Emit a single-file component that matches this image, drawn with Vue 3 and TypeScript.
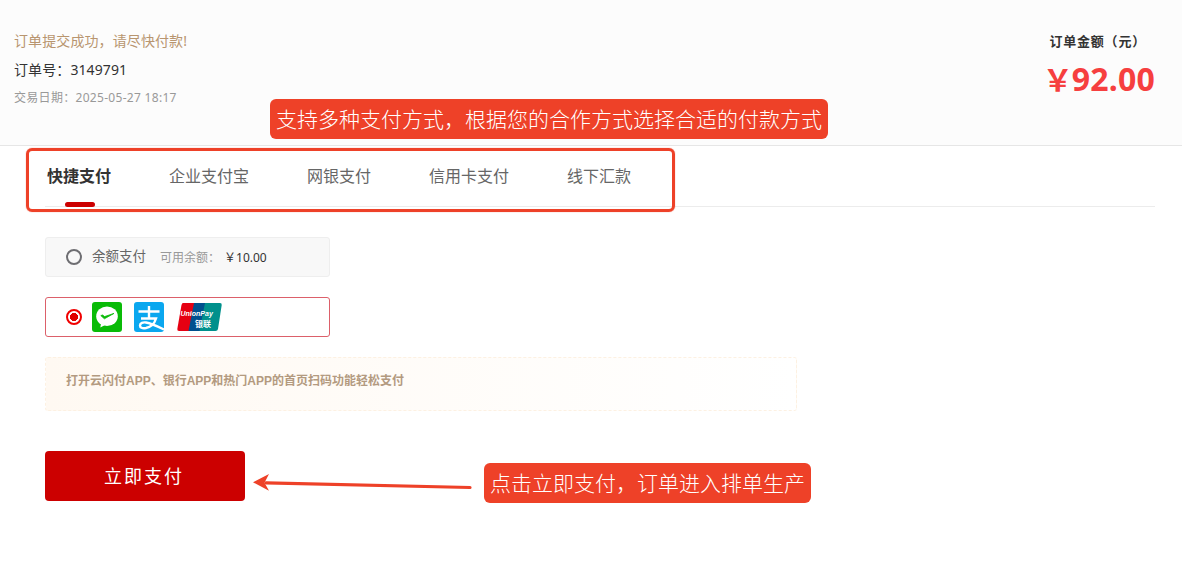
<script setup lang="ts">
const tabs: string[] = ['快捷支付', '企业支付宝', '网银支付', '信用卡支付', '线下汇款']
</script>

<template>
  <div class="page">
    <header class="head">
      <div class="info">
        <p class="tip">订单提交成功，请尽快付款!</p>
        <p class="no">订单号：3149791</p>
        <p class="date">交易日期：2025-05-27 18:17</p>
      </div>
      <div class="sum">
        <p class="sum-label">订单金额（元）</p>
        <p class="sum-value"><span class="yen">￥</span>92.00</p>
      </div>
    </header>

    <main class="body">
      <nav class="tabs">
        <span v-for="(t, i) in tabs" :key="t" class="tab" :class="{ on: i === 0 }">{{ t }}</span>
      </nav>

      <div class="opt balance">
        <i class="radio"></i>
        <span class="b-name">余额支付</span>
        <span class="b-avail">可用余额：</span>
        <span class="b-val">￥10.00</span>
      </div>

      <div class="opt chosen">
        <i class="radio red"></i>
        <svg class="ic" viewBox="0 0 30 30" width="30" height="30">
          <rect width="30" height="30" rx="3" fill="#09bb07" />
          <ellipse cx="15" cy="14.2" rx="10.8" ry="9.800" fill="#fff" />
          <path d="M9 21l-.6 4.500 4.600-2.600z" fill="#fff" />
          <path d="M8.800 13.600l3.600 3.200 9.600-5.400-9.400 3.200-2-1.600z" fill="#09bb07" stroke="#09bb07" stroke-width=".8" />
        </svg>
        <svg class="ic" viewBox="0 0 30 30" width="30" height="30">
          <rect width="30" height="30" rx="3" fill="#0aa7ef" />
          <g fill="none" stroke="#fff" stroke-width="2.400">
            <path d="M4.500 9.500h21M15 4v12.500M7 16.500h15c-1.500 5-5 8.500-10 9.500-4 .7-6-.5-6-2.500 0-2.500 3-3.500 6-3 3.800.6 10 3 18 7" />
          </g>
        </svg>
        <svg class="ic up" viewBox="0 0 45 28" width="45" height="28">
          <path d="M6 0h14l-5.500 28H2q-2 0-1.700-2L4.500 2Q5 0 6 0z" fill="#e60012" />
          <path d="M17 0h14l-5.500 28H11.500z" fill="#00508e" />
          <path d="M28 0h15q2 0 1.700 2L41 26q-.4 2-2.500 2H22.500z" fill="#00908c" />
          <text x="3.500" y="13" class="up-a">UnionPay</text>
          <text x="18" y="24" class="up-b">银联</text>
        </svg>
      </div>

      <div class="notice">打开云闪付APP、银行APP和热门APP的首页扫码功能轻松支付</div>

      <button class="pay" type="button">立即支付</button>
    </main>

    <!-- 标注层 -->
    <div class="mark-box"></div>
    <div class="callout c1">支持多种支付方式，根据您的合作方式选择合适的付款方式</div>
    <div class="callout c2">点击立即支付，订单进入排单生产</div>
    <svg class="arrow" viewBox="0 0 230 24" width="230" height="24">
      <path d="M217 15.500L13 10.800" stroke="#ee4128" stroke-width="3.200" stroke-linecap="round" fill="none" />
      <path d="M0 10.300L16 2L11.500 10.800L16 18.700z" fill="#ee4128" />
    </svg>
  </div>
</template>

<style>
html, body { margin: 0; background: #fff; }
</style>

<style scoped>
.page {
  position: relative;
  height: 573px;
  overflow: hidden;
  font-family: "Noto Sans", "Noto Sans CJK SC", sans-serif;
  color: #333;
}
p { margin: 0; }
.head {
  height: 145px;
  display: flex;
  justify-content: space-between;
  padding: 0 27px 0 14px;
  background: #fcfcfc;
  border-bottom: 1px solid #e6e6e6;
}
.info { padding-top: 31px; }
.tip { font-size: 14px; line-height: 20px; color: #b8956f; letter-spacing: .1px; }
.no { font-size: 14px; line-height: 20px; margin-top: 9px; color: #333; letter-spacing: .1px; }
.date { font-size: 12px; line-height: 16px; margin-top: 10px; color: #999; letter-spacing: .3px; }
.sum { padding-top: 32px; display: flex; flex-direction: column; align-items: flex-end; }
.sum-label { font-size: 13px; line-height: 18px; font-weight: 700; margin-right: 9px; letter-spacing: .8px; }
.sum-value { font-size: 32px; line-height: 44px; font-weight: 700; color: #f63f3f; margin-top: 7px; letter-spacing: .2px; }
.yen { font-size: 30px; letter-spacing: -1px; }
.body { padding: 0 27px 0 45px; }
.tabs {
  height: 60px;
  display: flex;
  gap: 58px;
  border-bottom: 1px solid #ececec;
  padding-left: 2px;
}
.tab {
  position: relative;
  font-size: 16px;
  line-height: 60px;
  color: #666;
}
.tab.on { font-weight: 700; color: #333; }
.tab.on::after {
  content: "";
  position: absolute;
  left: 18px;
  bottom: -1px;
  width: 30px;
  height: 5px;
  border-radius: 3px;
  background: #cc0000;
}
.opt {
  width: 285px;
  height: 40px;
  box-sizing: border-box;
  display: flex;
  align-items: center;
  padding-left: 20px;
  border-radius: 3px;
  border: 1px solid #eee;
}
.balance { margin-top: 30px; background: #f8f8f8; }
.chosen { margin-top: 20px; border-color: #dc606a; background: #fff; }
.radio {
  width: 16px;
  height: 16px;
  box-sizing: border-box;
  border-radius: 50%;
  border: 2px solid #6e6e72;
  flex: none;
}
.radio.red {
  border-color: #f00000;
  background: radial-gradient(circle, #e00000 0 3.800px, #fff 4.300px);
}
.b-name { margin-left: 10px; font-size: 13.500px; line-height: 18px; margin-top: -2px; color: #666; }
.b-avail { margin-left: 14px; font-size: 12px; color: #999; }
.b-val { margin-left: 4px; font-size: 12px; color: #333; }
.ic { margin-left: 10px; flex: none; }
.ic + .ic { margin-left: 12px; }
.ic.up { margin-left: 13px; }
.up-a { font: italic 700 7px "Liberation Sans", sans-serif; fill: #fff; }
.up-b { font: 700 8px "Noto Sans CJK SC", sans-serif; fill: #fff; }
.notice {
  width: 752px;
  height: 54px;
  box-sizing: border-box;
  margin-top: 20px;
  padding: 13px 20px 0;
  font-family: "Liberation Sans", "Noto Sans CJK SC", sans-serif;
  font-size: 12px;
  line-height: 20px;
  font-weight: 700;
  color: #b39a80;
  border: 1px dashed #fdf1e2;
  border-radius: 3px;
  background: linear-gradient(90deg, #fff9f2, #fff);
}
.pay {
  display: block;
  width: 200px;
  height: 50px;
  margin-top: 40px;
  padding: 0 2px 2px 0;
  border: 0;
  border-radius: 4px;
  background: #cc0000;
  color: #fff;
  font: 18px "Noto Sans", "Noto Sans CJK SC", sans-serif;
  letter-spacing: 2px;
}
.mark-box {
  position: absolute;
  left: 26px;
  top: 148px;
  width: 649px;
  height: 64px;
  box-sizing: border-box;
  border: 3px solid #ee4128;
  border-radius: 6px;
  box-shadow: 0 0 1px rgba(238, 65, 40, .8);
}
.callout {
  position: absolute;
  height: 40px;
  line-height: 40px;
  background: #ee4128;
  color: #fff;
  font-size: 21px;
  font-weight: 300;
  border-radius: 6px;
  text-align: center;
  white-space: nowrap;
}
.c1 { left: 270px; top: 99px; width: 558px; }
.c2 { left: 484px; top: 463px; width: 327px; }
.arrow { position: absolute; left: 253px; top: 472px; }
</style>
